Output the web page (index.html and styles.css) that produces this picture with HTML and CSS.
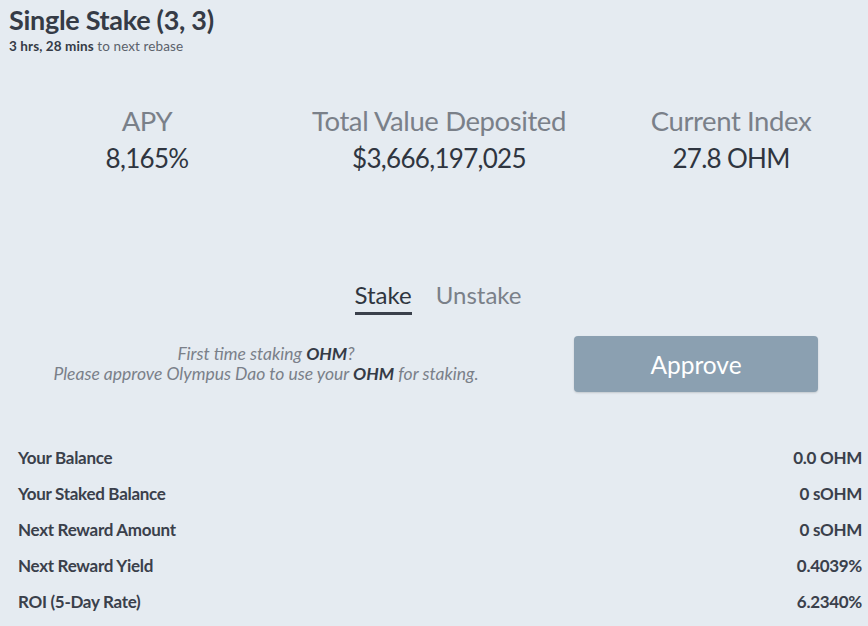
FILE: index.html
```html
<!DOCTYPE html>
<html>
<head>
  <title>Single Stake</title>
  <meta http-equiv="Content-Type" content="text/html;charset=utf-8" />
  <link rel="stylesheet" href="styles.css">
</head>
<body>
  <div class="header">
    <h1>Single Stake (3, 3)</h1>
    <p class="rebase"><b>3 hrs, 28 mins</b> to next rebase</p>
  </div>

  <div class="stats">
    <div class="stat">
      <div class="stat-label">APY</div>
      <div class="stat-value">8,165%</div>
    </div>
    <div class="stat">
      <div class="stat-label">Total Value Deposited</div>
      <div class="stat-value">$3,666,197,025</div>
    </div>
    <div class="stat">
      <div class="stat-label">Current Index</div>
      <div class="stat-value">27.8 OHM</div>
    </div>
  </div>

  <div class="tabs">
    <span class="tab active">Stake</span>
    <span class="tab">Unstake</span>
  </div>

  <div class="approve-row">
    <p class="help">
      First time staking <b>OHM</b>?<br>
      Please approve Olympus Dao to use your <b>OHM</b> for staking.
    </p>
    <button class="approve">Approve</button>
  </div>

  <div class="details">
    <div class="row"><span>Your Balance</span><span>0.0 OHM</span></div>
    <div class="row"><span>Your Staked Balance</span><span>0 sOHM</span></div>
    <div class="row"><span>Next Reward Amount</span><span>0 sOHM</span></div>
    <div class="row"><span>Next Reward Yield</span><span>0.4039%</span></div>
    <div class="row"><span>ROI (5-Day Rate)</span><span>6.2340%</span></div>
  </div>
</body>
</html>
```

FILE: styles.css
```css
body {
  background: #e5ebf1;
  font-family: Lato, "Noto Sans", sans-serif;
  color: #353b46;
  margin: 0;
  padding: 0;
  width: 868px;
  overflow: hidden;
}
.header { padding: 4px 0 0 9px; }
.header h1 {
  margin: 0;
  font-size: 27px;
  font-weight: bold;
  line-height: 32px;
  letter-spacing: -0.3px;
}
.rebase {
  margin: 2px 0 0;
  font-size: 13.5px;
  line-height: 16px;
  color: #5b616b;
  letter-spacing: 0.1px;
}
.rebase b { color: #353b46; }

.stats {
  display: grid;
  grid-template-columns: repeat(3, 292px);
  margin: 51px 0 0 1px;
  text-align: center;
}
.stat-label {
  font-size: 27.5px;
  line-height: 32px;
  color: #7a8089;
  letter-spacing: -0.4px;
}
.stat-value {
  font-size: 26px;
  line-height: 32px;
  margin-top: 5px;
  color: #2f3540;
  letter-spacing: -0.7px;
}

.tabs {
  display: flex;
  justify-content: center;
  gap: 24px;
  margin: 106px 0 0 8px;
}
.tab {
  font-size: 24px;
  line-height: 30px;
  color: #7a8089;
  padding-bottom: 2px;
  border-bottom: 3px solid transparent;
}
.tab.active {
  color: #2f3540;
  border-bottom-color: #3a404b;
}

.approve-row {
  display: flex;
  align-items: center;
  margin-top: 21px;
  height: 56px;
}
.help {
  width: 532px;
  margin: 0;
  text-align: center;
  font-style: italic;
  font-size: 17.5px;
  line-height: 20px;
  color: #7a8089;
  letter-spacing: 0;
}
.help b { color: #353b46; }
.approve {
  margin-left: 42px;
  width: 244px;
  height: 56px;
  border: 0;
  border-radius: 4px;
  background: #8ba0b1;
  color: #fff;
  font-family: inherit;
  font-size: 24.5px;
  box-shadow: 0 1px 2px rgba(0, 0, 0, 0.15);
}

.details { margin: 48px 6px 0 18px; }
.row {
  display: flex;
  justify-content: space-between;
  font-size: 17px;
  font-weight: bold;
  line-height: 36px;
  color: #3a404b;
  letter-spacing: -0.3px;
}
```
